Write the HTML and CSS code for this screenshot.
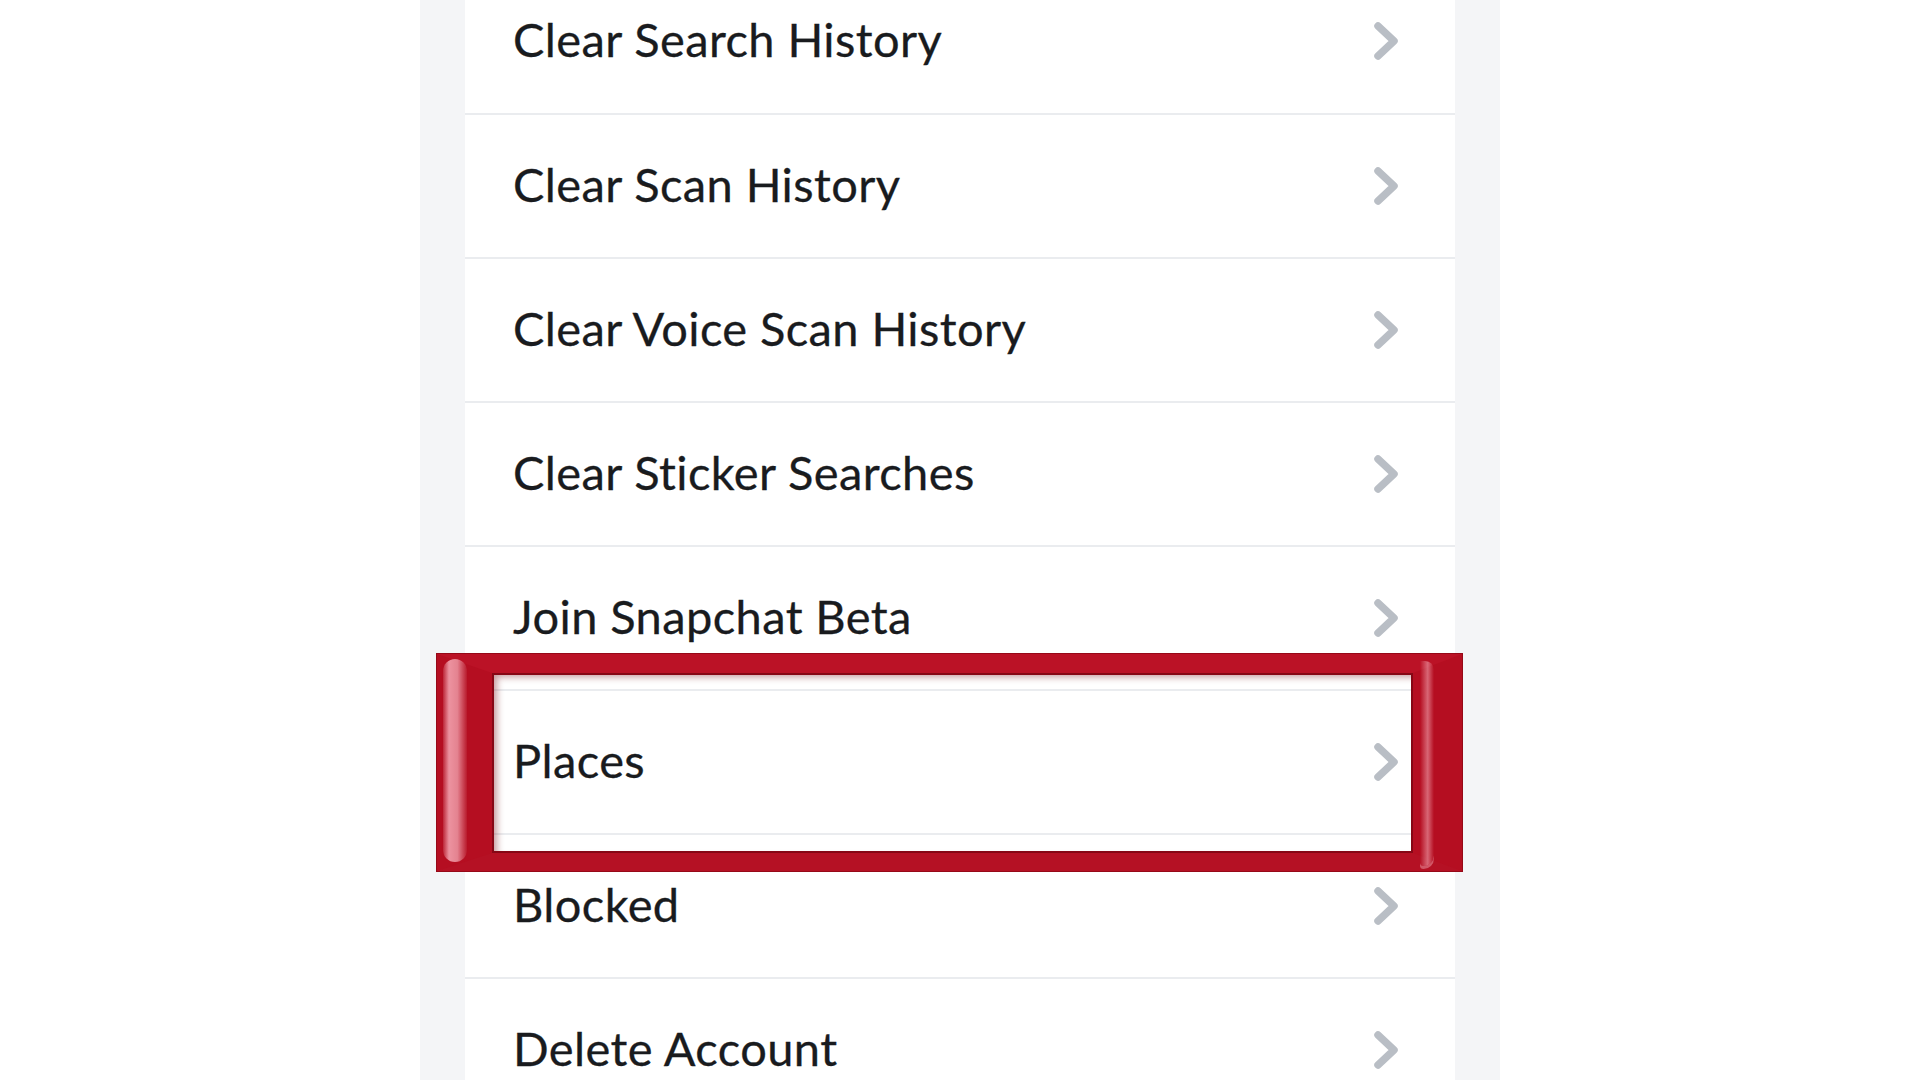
FILE: index.html
```html
<!DOCTYPE html>
<html lang="en">
<head>
  <meta charset="UTF-8" />
  <meta name="viewport" content="width=device-width, initial-scale=1" />
  <title>Settings</title>
  <link rel="stylesheet" href="styles.css">
</head>
<body>
  <main class="panel">
    <div class="list-wrap">
      <ul class="list">
        <li class="row"><span>Clear Search History</span><svg class="chev" viewBox="0 0 26 40" aria-hidden="true"><path d="M5 5 L21 20 L5 35" /></svg></li>
        <li class="row"><span>Clear Scan History</span><svg class="chev" viewBox="0 0 26 40" aria-hidden="true"><path d="M5 5 L21 20 L5 35" /></svg></li>
        <li class="row"><span>Clear Voice Scan History</span><svg class="chev" viewBox="0 0 26 40" aria-hidden="true"><path d="M5 5 L21 20 L5 35" /></svg></li>
        <li class="row"><span>Clear Sticker Searches</span><svg class="chev" viewBox="0 0 26 40" aria-hidden="true"><path d="M5 5 L21 20 L5 35" /></svg></li>
        <li class="row"><span>Join Snapchat Beta</span><svg class="chev" viewBox="0 0 26 40" aria-hidden="true"><path d="M5 5 L21 20 L5 35" /></svg></li>
        <li class="row"><span>Places</span><svg class="chev" viewBox="0 0 26 40" aria-hidden="true"><path d="M5 5 L21 20 L5 35" /></svg></li>
        <li class="row"><span>Blocked</span><svg class="chev" viewBox="0 0 26 40" aria-hidden="true"><path d="M5 5 L21 20 L5 35" /></svg></li>
        <li class="row"><span>Delete Account</span><svg class="chev" viewBox="0 0 26 40" aria-hidden="true"><path d="M5 5 L21 20 L5 35" /></svg></li>
      </ul>
      <!-- annotation frame around "Places" -->
      <div class="highlight" aria-hidden="true"></div>
    </div>
  </main>
</body>
</html>
```

FILE: styles.css
```css
:root{
  --panel:#f4f5f7;
  --line:#eaecef;
  --text:#191b1e;
  --chev:#b9bec5;
  --red:#b50e21;
}

* { box-sizing: border-box; }
html, body { height: 100%; }
body{
  margin:0; background:#fff; overflow:hidden;
  font-family: Lato, "Noto Sans", "Liberation Sans", sans-serif;
  color:var(--text);
}

.panel{
  width:1080px; height:100vh; margin:0 auto;
  background:var(--panel);
  padding:0 45px;
  display:flow-root;
}

.list-wrap{ position:relative; margin-top:-31px; }

.list{ list-style:none; margin:0; padding:0; background:#fff; }

.row{
  height:144px; display:flex; align-items:center; justify-content:space-between;
  padding:0 56px 0 48px;
  border-top:2px solid var(--line);
  font-size:47px; letter-spacing:.4px;
  -webkit-text-stroke:.3px var(--text);
}
.row:first-child{ border-top:none; }
.row span{ margin-top:-4px; }

.chev{ width:26px; height:40px; flex:none; }
.chev path{ fill:none; stroke:var(--chev); stroke-width:7.5; stroke-linecap:round; stroke-linejoin:round; }

/* glossy red frame */
.highlight{
  position:absolute; left:-28px; right:-7px; top:685px; height:217px;
  border-style:solid; border-width:19px 49px 18px 55px;
  border-color:var(--red);
  border-top-color:#bb1226; border-bottom-color:#b51124;
  box-shadow: 0 0 0 1px #960918, inset 0 0 0 2px #860715, inset 5px 4px 7px rgba(110,0,10,.4);
}
.highlight::before{
  content:""; position:absolute; left:-49px; top:-14px; bottom:-9px; width:24px;
  border-radius:12px;
  background: linear-gradient(90deg, rgba(255,255,255,.1), rgba(246,170,182,.85) 25%, rgba(240,160,172,.8) 60%, rgba(255,255,255,.05));
}
.highlight::after{
  content:""; position:absolute; right:-21px; top:-12px; bottom:-13px; width:14px;
  border-radius:0 10px 12px 4px;
  background: linear-gradient(90deg, rgba(255,255,255,0), rgba(245,175,186,.55) 55%, rgba(255,255,255,0));
  box-shadow: 0 3px 0 rgba(245,175,186,.45);
}
```
